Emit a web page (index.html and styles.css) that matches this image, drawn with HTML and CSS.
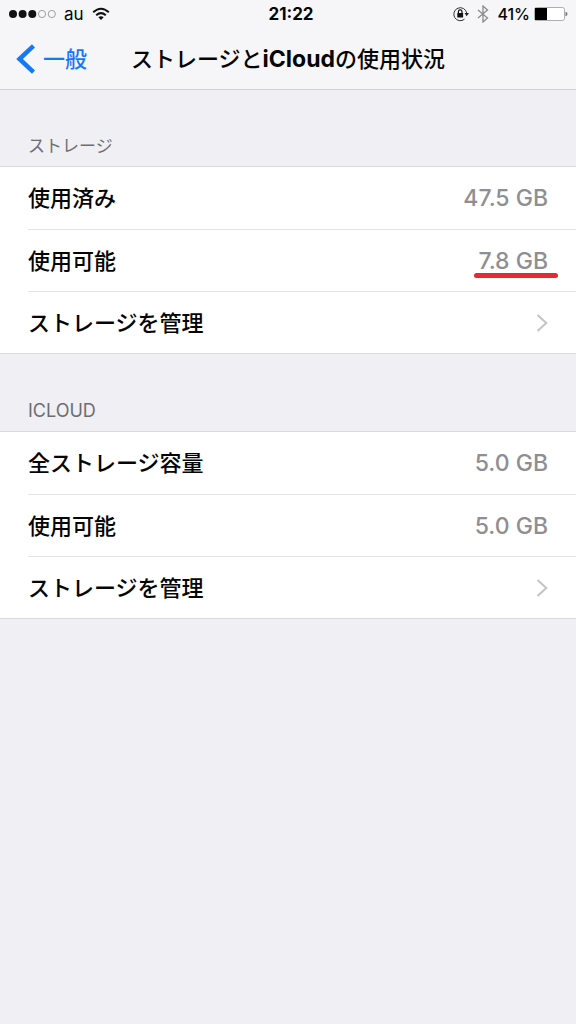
FILE: index.html
```html
<!DOCTYPE html>
<html lang="ja">
<head>
<meta charset="utf-8">
<meta name="viewport" content="width=device-width, initial-scale=1">
<title>ストレージとiCloudの使用状況</title>
<link rel="stylesheet" href="styles.css">
</head>
<body>
<header class="top">
  <div class="status">
    <div class="status-left">
      <svg class="signal" width="48" height="10" viewBox="0 0 48 10" aria-hidden="true">
        <g fill="#111"><circle cx="5" cy="5" r="4"/><circle cx="14.600" cy="5" r="4"/><circle cx="24.300" cy="5" r="4"/></g>
        <g fill="none" stroke="#888" stroke-width=".8"><circle cx="34" cy="5" r="3.600"/><circle cx="43.800" cy="5" r="3.600"/></g>
      </svg>
      <span class="carrier">au</span>
      <svg width="18" height="14" viewBox="0 0 18 14" aria-hidden="true">
        <g fill="none" stroke="#111" stroke-width="2"><path d="M1.200 5.200Q9-1.800 16.800 5.200"/><path d="M4.200 8.300Q9 4 13.800 8.300"/></g>
        <path fill="#111" d="M6.300 10.300Q9 8 11.700 10.300L9 13z"/>
      </svg>
    </div>
    <time class="clock">21:22</time>
    <div class="status-right">
      <svg width="16" height="16" viewBox="0 0 16 16" aria-hidden="true">
        <path fill="none" stroke="#333" stroke-width="1" d="M11.500 13.200A6.500 6.500 0 1 1 13.700 7"/>
        <path fill="#222" d="M11.500 7h4.500l-2.300 3.200z"/>
        <rect x="4.300" y="7" width="5.800" height="4.500" rx=".5" fill="#111"/>
        <path fill="none" stroke="#111" stroke-width="1.200" d="M5.400 7.300V5.700a1.800 1.800 0 0 1 3.600 0v1.600"/>
      </svg>
      <svg width="12" height="18" viewBox="0 0 12 18" aria-hidden="true">
        <path fill="none" stroke="#8a8a8e" stroke-width="1.300" d="M1 5l9.500 8L6 17V1l4.500 4L1 13"/>
      </svg>
      <span class="percent">41%</span>
      <svg width="34" height="14" viewBox="0 0 34 14" aria-hidden="true">
        <rect x=".500" y=".500" width="30" height="13" rx="2" fill="#fff" stroke="#9a9a9e" stroke-width=".8"/>
        <path fill="#000" d="M1 1h12v12H1z"/>
        <path fill="#777" d="M31.500 4.800q2 .400 2 2.200t-2 2.200z"/>
      </svg>
    </div>
  </div>
  <nav class="nav">
    <a class="back" href="#">
      <svg width="19" height="30" viewBox="0 0 19 30" aria-hidden="true"><path fill="none" stroke="#1579f6" stroke-width="4.500" d="M17.500 1.800L3.500 15l14 13.200"/></svg>
      <span class="label">一般</span>
    </a>
    <h1 class="title label">ストレージと<span class="brand">iCloud</span>の使用状況</h1>
  </nav>
</header>
<main>
  <section class="group">
    <h2 class="heading">ストレージ</h2>
    <ul class="list">
      <li class="item"><div class="row"><span class="label">使用済み</span><span class="value">47.5 GB</span></div></li>
      <li class="item"><div class="row"><span class="label">使用可能</span><span class="value marked">7.8 GB</span></div></li>
      <li class="item"><a class="row" href="#"><span class="label">ストレージを管理</span>
        <svg width="12" height="20" viewBox="0 0 12 20" aria-hidden="true"><path fill="none" stroke="#c3c3c8" stroke-width="2" d="M1.500 2l8.800 8-8.800 8"/></svg></a></li>
    </ul>
  </section>
  <section class="group">
    <h2 class="heading heading-latin">ICLOUD</h2>
    <ul class="list">
      <li class="item"><div class="row"><span class="label">全ストレージ容量</span><span class="value">5.0 GB</span></div></li>
      <li class="item"><div class="row"><span class="label">使用可能</span><span class="value">5.0 GB</span></div></li>
      <li class="item"><a class="row" href="#"><span class="label">ストレージを管理</span>
        <svg width="12" height="20" viewBox="0 0 12 20" aria-hidden="true"><path fill="none" stroke="#c3c3c8" stroke-width="2" d="M1.500 2l8.800 8-8.800 8"/></svg></a></li>
    </ul>
  </section>
</main>
</body>
</html>
```
FILE: styles.css
```css
* {
  box-sizing: border-box;
}

body {
  margin: 0;
  min-height: 100vh;
  background: #efeff4;
  color: #050505;
  font-family: Inter, "Noto Sans CJK JP", sans-serif;
  font-size: 22px;
  font-weight: 500;
}

a {
  color: inherit;
  text-decoration: none;
}

svg {
  display: block;
  flex: none;
}

.top {
  background: #f6f6f8;
  border-bottom: 1px solid #cfcfd4;
}

.status {
  display: grid;
  grid-template-columns: 1fr auto 1fr;
  align-items: center;
  height: 28px;
  padding: 0 8px;
  font-size: 16px;
  line-height: 20px;
}

.status-left,
.status-right {
  display: flex;
  align-items: center;
  gap: 8px;
}

.status-right {
  justify-content: flex-end;
}

.carrier {
  font-size: 17px;
  font-weight: 400;
}

.percent {
  margin-right: -4px;
}

.clock {
  font-size: 17px;
  font-weight: 700;
  padding-left: 6px;
}

.nav {
  display: grid;
  grid-template-columns: 1fr auto 1fr;
  align-items: center;
  height: 61px;
  padding: 0 16px;
}

.back {
  display: flex;
  align-items: center;
  gap: 8px;
  color: #1579f6;
}

.label {
  padding-bottom: 4px;
}

.title {
  margin: 0;
  font-size: 22px;
  font-weight: 500;
}

.brand {
  font-size: 23px;
  font-weight: 700;
}

.group + .group {
  margin-top: 1px;
}

.heading {
  display: flex;
  align-items: flex-end;
  height: 76px;
  margin: 0;
  padding: 0 28px 8px;
  color: #6d6d72;
  font-size: 17px;
  font-weight: 400;
  line-height: 24px;
}

.heading-latin {
  font-size: 18px;
}

.list {
  margin: 0;
  padding: 0 0 0 28px;
  list-style: none;
  background: #fff;
  border: solid #d9d9df;
  border-width: 1px 0;
}

.item {
  height: 62px;
}

.item + .item {
  border-top: 1px solid #e4e4e7;
}

.row {
  display: flex;
  align-items: center;
  justify-content: space-between;
  height: 100%;
  padding-right: 28px;
}

.value {
  position: relative;
  color: #8e8e93;
  font-size: 23px;
}

.marked::after {
  content: "";
  position: absolute;
  left: -4px;
  right: -10px;
  bottom: -3px;
  height: 5px;
  border-radius: 3px;
  background: #e42b31;
}
```
